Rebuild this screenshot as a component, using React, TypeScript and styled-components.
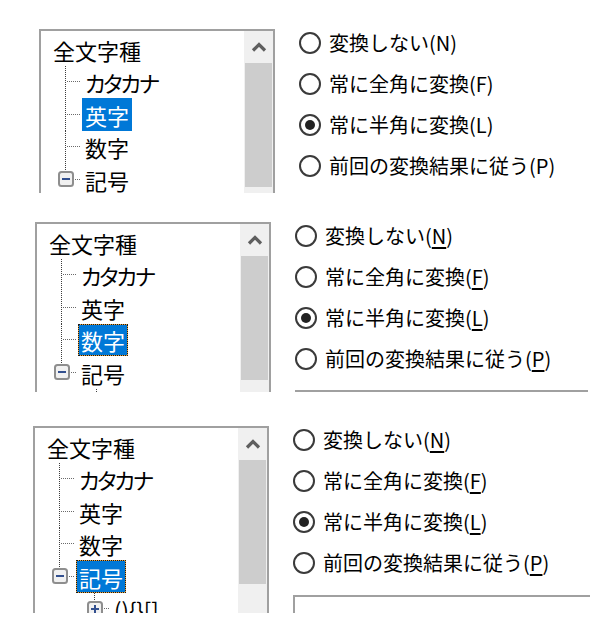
import React from "react";
import styled, { createGlobalStyle, css } from "styled-components";

const GlobalStyle = createGlobalStyle`
  html, body { margin: 0; padding: 0; background: #fff; }
  body {
    font-family: "Noto Sans CJK JP", "Noto Sans", sans-serif;
    color: #000;
  }
`;

const LINE = "#6a6a6a";
const STEM = "#3c3c3c";

const Page = styled.div`
  width: 607px;
  height: 640px;
  overflow: hidden;
  display: flex;
  flex-direction: column;
  background: #fff;
`;

const Panel = styled.section<{ $top: number; $left: number; $height: number }>`
  margin-top: ${(p) => p.$top}px;
  padding-left: ${(p) => p.$left}px;
  height: ${(p) => p.$height}px;
  flex-shrink: 0;
  overflow: hidden;
  display: flex;
  align-items: flex-start;
  gap: 24px;
`;

const TreeBox = styled.div`
  width: 236px;
  height: 240px;
  box-sizing: border-box;
  border: 2px solid #a0a0a0;
  display: flex;
  flex-shrink: 0;
  background: #fff;
`;

const TreeContent = styled.div`
  flex: 1;
  padding-top: 2px;
  display: flex;
  flex-direction: column;
`;

const TreeRow = styled.div`
  height: 33px;
  display: flex;
  align-items: stretch;
  flex-shrink: 0;
  &:nth-child(even) {
    height: 32px;
  }
`;

const Label = styled.span<{ $selected?: boolean; $focus?: boolean; $root?: boolean; $tight?: boolean }>`
  display: flex;
  align-items: center;
  padding: 0 2px;
  border: 1px solid transparent;
  margin-left: ${(p) => (p.$root ? 9 : 0)}px;
  font-size: 22px;
  line-height: 1;
  font-feature-settings: "palt";
  letter-spacing: ${(p) => (p.$tight ? "-2px" : "0")};
  white-space: nowrap;
  ${(p) =>
    p.$selected &&
    css`
      color: #fff;
      background: #0078d7;
    `}
  ${(p) =>
    p.$focus &&
    css`
      border: 1px dotted #1a1a1a;
      background: linear-gradient(#0078d7, #0078d7) padding-box, #e9a13a border-box;
    `}
`;

const Guide = styled.div<{ $width: number }>`
  width: ${(p) => p.$width}px;
  flex-shrink: 0;
  display: flex;
  align-items: stretch;
`;

const GuideIndent = styled.div<{ $width: number }>`
  width: ${(p) => p.$width}px;
  flex-shrink: 0;
`;

const GuideStem = styled.div<{ $mode: "full" | "half" | "box" }>`
  width: 1px;
  flex-shrink: 0;
  align-self: ${(p) => (p.$mode === "full" ? "stretch" : "flex-start")};
  height: ${(p) => (p.$mode === "half" ? "16px" : p.$mode === "box" ? "8px" : "auto")};
  background: repeating-linear-gradient(to bottom, ${STEM} 0 1px, transparent 1px 2px);
`;

const BranchArea = styled.div`
  flex: 1;
  display: flex;
  align-items: center;
  padding-bottom: 1px;
`;

const BranchLine = styled.div`
  flex: 1;
  height: 1px;
  margin: 0 1px 0 1px;
  background: repeating-linear-gradient(to right, ${LINE} 0 1px, transparent 1px 2px);
`;

const Scrollbar = styled.div`
  width: 29px;
  flex-shrink: 0;
  padding-top: 1px;
  background: #f0f0f0;
  display: flex;
  flex-direction: column;
`;

const ScrollButton = styled.div`
  height: 30px;
  display: flex;
  align-items: center;
  justify-content: center;
`;

const Thumb = styled.div`
  margin: 1px 1px 0;
  height: 124px;
  background: #cdcdcd;
`;

const RadioColumn = styled.div<{ $width: number }>`
  width: ${(p) => p.$width}px;
  display: flex;
  flex-direction: column;
  gap: 13px;
`;

const RadioRow = styled.label`
  height: 28px;
  display: flex;
  align-items: center;
  gap: 8px;
  font-size: 20px;
  line-height: 1;
  white-space: nowrap;
`;

const RadioCircle = styled.span<{ $checked?: boolean }>`
  width: 22px;
  height: 22px;
  box-sizing: border-box;
  border: 2px solid #3a3a3a;
  border-radius: 50%;
  background: #fff;
  display: flex;
  align-items: center;
  justify-content: center;
  flex-shrink: 0;
  &::after {
    content: "";
    width: 10px;
    height: 10px;
    border-radius: 50%;
    background: ${(p) => (p.$checked ? "#222" : "transparent")};
  }
`;

const Mnemonic = styled.span<{ $underline?: boolean }>`
  text-decoration: ${(p) => (p.$underline ? "underline" : "none")};
  text-underline-offset: 3px;
  text-decoration-thickness: 1.5px;
`;

const Separator = styled.div`
  margin-top: 4px;
  height: 2px;
  width: 293px;
  background: #a0a0a0;
`;

const GroupBox = styled.div`
  margin-top: 5px;
  width: 297px;
  height: 60px;
  box-sizing: border-box;
  border-top: 2px solid #a0a0a0;
  border-left: 2px solid #a0a0a0;
`;

type Expander = "minus" | "plus" | undefined;

function ExpanderIcon({ kind }: { kind: "minus" | "plus" }) {
  return (
    <svg width="16" height="16" viewBox="0 0 16 16" style={{ display: "block", flexShrink: 0 }}>
      <rect x={1} y={1} width={14} height={14} rx={2.5} fill="#f1f1f1" stroke="#8e8e8e" strokeWidth={2} />
      <rect x={4} y={7} width={8} height={2} fill="#33508f" />
      {kind === "plus" && <rect x={7} y={4} width={2} height={8} fill="#33508f" />}
    </svg>
  );
}

const ExpanderSlot = styled.div`
  margin-left: -8px;
  display: flex;
`;

function TreeGuide({ indent, width, last, expander }: { indent: number; width: number; last?: boolean; expander?: Expander }) {
  return (
    <Guide $width={width}>
      <GuideIndent $width={indent} />
      <GuideStem $mode={expander ? "box" : last ? "half" : "full"} />
      <BranchArea>
        {expander && (
          <ExpanderSlot>
            <ExpanderIcon kind={expander} />
          </ExpanderSlot>
        )}
        <BranchLine />
      </BranchArea>
    </Guide>
  );
}

function Tree({ selected, focus }: { selected: string; focus: boolean }) {
  const children = ["カタカナ", "英字", "数字"];
  return (
    <TreeBox>
      <TreeContent>
        <TreeRow>
          <Label $root>全文字種</Label>
        </TreeRow>
        {children.map((c) => (
          <TreeRow key={c}>
            <TreeGuide indent={24} width={41} />
            <Label $tight={c === "カタカナ"} $selected={selected === c} $focus={focus && selected === c}>
              {c}
            </Label>
          </TreeRow>
        ))}
        <TreeRow>
          <TreeGuide indent={24} width={41} last expander="minus" />
          <Label $selected={selected === "記号"} $focus={focus && selected === "記号"}>
            記号
          </Label>
        </TreeRow>
        <TreeRow>
          <TreeGuide indent={59} width={76} expander="plus" />
          <Label>(){"{}"}[]</Label>
        </TreeRow>
      </TreeContent>
      <Scrollbar>
        <ScrollButton>
          <svg width="16" height="10" viewBox="0 0 16 10">
            <path d="M2 8.5 L8 2.5 L14 8.5" fill="none" stroke="#5f5f5f" strokeWidth="3.2" />
          </svg>
        </ScrollButton>
        <Thumb />
      </Scrollbar>
    </TreeBox>
  );
}

const OPTIONS: { text: string; key: string; checked?: boolean }[] = [
  { text: "変換しない", key: "N" },
  { text: "常に全角に変換", key: "F" },
  { text: "常に半角に変換", key: "L", checked: true },
  { text: "前回の変換結果に従う", key: "P" },
];

function Radios({ underline, footer, width }: { underline: boolean; footer?: "sep" | "group"; width: number }) {
  return (
    <RadioColumn $width={width}>
      {OPTIONS.map((o) => (
        <RadioRow key={o.key}>
          <RadioCircle $checked={o.checked} />
          <span>
            {o.text}(<Mnemonic $underline={underline}>{o.key}</Mnemonic>)
          </span>
        </RadioRow>
      ))}
      {footer === "sep" && <Separator />}
      {footer === "group" && <GroupBox />}
    </RadioColumn>
  );
}

export default function App() {
  return (
    <>
      <GlobalStyle />
      <Page>
        <Panel $top={29} $left={39} $height={164}>
          <Tree selected="英字" focus={false} />
          <Radios underline={false} width={297} />
        </Panel>
        <Panel $top={29} $left={35} $height={170}>
          <Tree selected="数字" focus={true} />
          <Radios underline={true} footer="sep" width={297} />
        </Panel>
        <Panel $top={34} $left={33} $height={187}>
          <Tree selected="記号" focus={true} />
          <Radios underline={true} footer="group" width={297} />
        </Panel>
      </Page>
    </>
  );
}
